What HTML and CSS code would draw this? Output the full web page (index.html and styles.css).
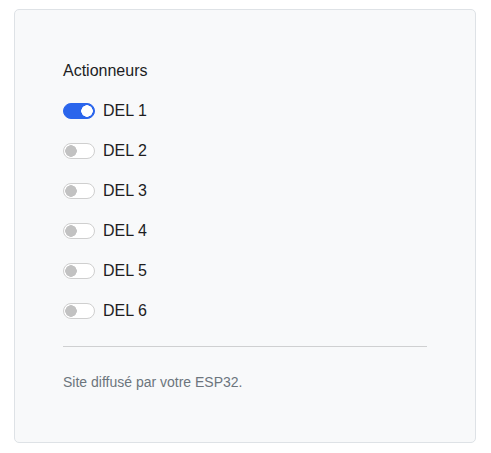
FILE: index.html
```html
<!DOCTYPE html>
<html lang="fr">
<head>
<meta charset="utf-8">
<title>ESP32</title>
<link rel="stylesheet" href="styles.css">
</head>
<body>
<div class="page">
  <div class="card">
    <h2 class="title">Actionneurs</h2>
    <div class="list">
      <label class="row"><input type="checkbox" class="switch" checked><span>DEL 1</span></label>
      <label class="row"><input type="checkbox" class="switch"><span>DEL 2</span></label>
      <label class="row"><input type="checkbox" class="switch"><span>DEL 3</span></label>
      <label class="row"><input type="checkbox" class="switch"><span>DEL 4</span></label>
      <label class="row"><input type="checkbox" class="switch"><span>DEL 5</span></label>
      <label class="row"><input type="checkbox" class="switch"><span>DEL 6</span></label>
    </div>
    <hr class="divider">
    <p class="footer">Site diffusé par votre ESP32.</p>
  </div>
</div>
</body>
</html>
```

FILE: styles.css
```css
* { box-sizing: border-box; }
html, body { margin: 0; padding: 0; background: #fff; }
body {
  font-family: "Liberation Sans", Arial, sans-serif;
  font-size: 16px;
  line-height: 24px;
  color: #1d1d1f;
}
.page { padding: 9px 15px 11px 14px; }
.card {
  background: #f8f9fa;
  border: 1px solid #dee2e6;
  border-radius: 5px;
  padding: 49px 48px 48px;
  min-height: 434px;
}
.title {
  margin: 0 0 16px;
  font-size: 16px;
  font-weight: 400;
  line-height: 24px;
}
.list { display: flex; flex-direction: column; gap: 16px; }
.row {
  display: flex;
  align-items: center;
  gap: 8px;
  height: 24px;
}
.switch {
  appearance: none;
  -webkit-appearance: none;
  margin: 0;
  width: 32px;
  height: 16px;
  border-radius: 8px;
  border: 1px solid #cfcfcf;
  background-color: #fff;
  background-image: radial-gradient(circle at 7px 7px, #c2c2c2 0 5.5px, transparent 6px);
  flex: none;
}
.switch:checked {
  background-color: #2a65ec;
  border-color: #2a65ec;
  background-image: radial-gradient(circle at 23px 7px, #fff 0 5.5px, transparent 6px);
}
.divider {
  margin: 23px 0 25px;
  border: 0;
  border-top: 1px solid #cfd0d1;
}
.footer {
  margin: 0;
  font-size: 14px;
  line-height: 21px;
  color: #6c757d;
}
```
